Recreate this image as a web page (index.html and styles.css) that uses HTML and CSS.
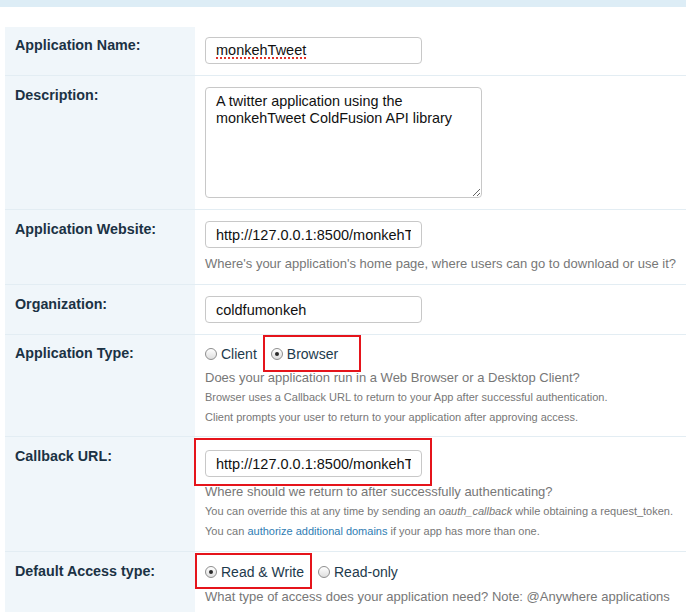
FILE: index.html
```html
<!DOCTYPE html>
<html>
<head>
<meta charset="utf-8">
<link rel="stylesheet" href="styles.css">
</head>
<body>
<div class="topbar"></div>
<div class="form">
  <div class="row row-first">
    <div class="label">Application Name:</div>
    <div class="field"><div class="text"><span class="spell">monkehTweet</span></div></div>
  </div>
  <div class="row">
    <div class="label">Description:</div>
    <div class="field"><textarea class="area">A twitter application using the monkehTweet ColdFusion API library</textarea></div>
  </div>
  <div class="row">
    <div class="label">Application Website:</div>
    <div class="field">
      <input class="text" type="text" value="http://127.0.0.1:8500/monkehTweet/">
      <p class="hint hint-web">Where's your application's home page, where users can go to download or use it?</p>
    </div>
  </div>
  <div class="row">
    <div class="label">Organization:</div>
    <div class="field"><input class="text" type="text" value="coldfumonkeh"></div>
  </div>
  <div class="row row-type">
    <div class="label">Application Type:</div>
    <div class="field">
      <div class="radios">
        <span class="radio"><span class="dot"></span>Client</span>
        <span class="radio hl hl-browser"><span class="dot on"></span>Browser</span>
      </div>
      <p class="hint">Does your application run in a Web Browser or a Desktop Client?</p>
      <p class="small">Browser uses a Callback URL to return to your App after successful authentication.</p>
      <p class="small">Client prompts your user to return to your application after approving access.</p>
    </div>
  </div>
  <div class="row row-cb">
    <div class="label">Callback URL:</div>
    <div class="field">
      <span class="hl hl-cb"><input class="text" type="text" value="http://127.0.0.1:8500/monkehTweet/"></span>
      <p class="hint">Where should we return to after successfully authenticating?</p>
      <p class="small">You can override this at any time by sending an <em>oauth_callback</em> while obtaining a request_token.</p>
      <p class="small">You can <a href="#" class="link">authorize additional domains</a> if your app has more than one.</p>
    </div>
  </div>
  <div class="row row-access">
    <div class="label">Default Access type:</div>
    <div class="field">
      <div class="radios">
        <span class="radio hl hl-rw"><span class="dot on"></span>Read &amp; Write</span>
        <span class="radio"><span class="dot"></span>Read-only</span>
      </div>
      <p class="hint hint-access">What type of access does your application need? Note: @Anywhere applications</p>
    </div>
  </div>
</div>
</body>
</html>
```

FILE: styles.css
```css
html, body {
  margin: 0;
  padding: 0;
  background: #ffffff;
  overflow: hidden;
}
body {
  font-family: "Liberation Sans", Arial, sans-serif;
  width: 686px;
  height: 612px;
}
.topbar {
  height: 7px;
  background: #ddedf6;
}
.form {
  margin: 20px 0 0 5px;
}
.row {
  display: flex;
  border-top: 1px solid #e3edf3;
}
.row-first {
  border-top: none;
}
.label {
  width: 170px;
  flex: none;
  background: #f0f6fa;
  padding: 11px 10px 10px 10px;
  font-size: 14.3px;
  line-height: 17px;
  font-weight: bold;
  color: #1b3244;
}
.field {
  flex: 1;
  padding: 11px 10px 11px 10px;
  min-width: 0;
}
.row-first .label,
.row-first .field {
  padding-top: 10px;
}
.row-type .label,
.row-type .field {
  padding-top: 10px;
}
.row-type .field {
  padding-bottom: 9px;
}
.row-cb .field {
  padding-top: 13px;
  padding-bottom: 10px;
}
.row-access .label,
.row-access .field {
  padding-top: 11px;
}
.text {
  display: block;
  box-sizing: border-box;
  width: 217px;
  height: 27px;
  margin: 0;
  padding: 0 10px;
  border: 1px solid #c8c8c8;
  border-radius: 4px;
  font-family: "Liberation Sans", Arial, sans-serif;
  font-size: 14.5px;
  line-height: 25px;
  color: #111;
  background: #fff;
  outline: none;
  overflow: hidden;
  white-space: nowrap;
}
.spell {
  text-decoration: underline dotted #e0322a;
  text-decoration-thickness: 2px;
  text-underline-offset: 2px;
}
.area {
  display: block;
  box-sizing: border-box;
  width: 277px;
  height: 111px;
  margin: 0;
  padding: 5px 10px;
  border: 1px solid #c8c8c8;
  border-radius: 4px;
  font-family: "Liberation Sans", Arial, sans-serif;
  font-size: 14.4px;
  line-height: 17px;
  color: #111;
  resize: both;
  outline: none;
}
.hint {
  margin: 6px 0 0 0;
  font-size: 13px;
  line-height: 18px;
  color: #777;
  white-space: nowrap;
}
.hint-web {
  margin-top: 7px;
}
.hint-access {
  margin-top: 7px;
}
.small {
  margin: 0;
  font-size: 11px;
  line-height: 20px;
  color: #777;
  white-space: nowrap;
}
.small em {
  font-style: italic;
}
.small .link,
.link {
  color: #2f7db3;
  text-decoration: none;
}
.radios {
  display: flex;
  gap: 14px;
  height: 18px;
  align-items: center;
}
.radio {
  display: inline-flex;
  align-items: center;
  gap: 4px;
  font-size: 14px;
  line-height: 18px;
  color: #1d3a4c;
}
.dot {
  position: relative;
  box-sizing: border-box;
  width: 12px;
  height: 12px;
  border-radius: 50%;
  border: 1px solid #8e8e8e;
  background: linear-gradient(#ffffff, #dedede);
}
.dot.on::after {
  content: "";
  position: absolute;
  left: 3px;
  top: 3px;
  width: 4px;
  height: 4px;
  border-radius: 50%;
  background: #2a2a2a;
}
.hl {
  position: relative;
}
.hl::after {
  content: "";
  position: absolute;
  border: 2px solid #e5141b;
  pointer-events: none;
}
.hl-browser::after {
  left: -8px;
  right: -23px;
  top: -10px;
  bottom: -9px;
}
.hl-rw::after {
  left: -10px;
  right: -8px;
  top: -10px;
  bottom: -8px;
}
.hl-cb {
  display: block;
  width: 217px;
}
.hl-cb::after {
  left: -11px;
  right: -10px;
  top: -12px;
  bottom: -9px;
}
```
